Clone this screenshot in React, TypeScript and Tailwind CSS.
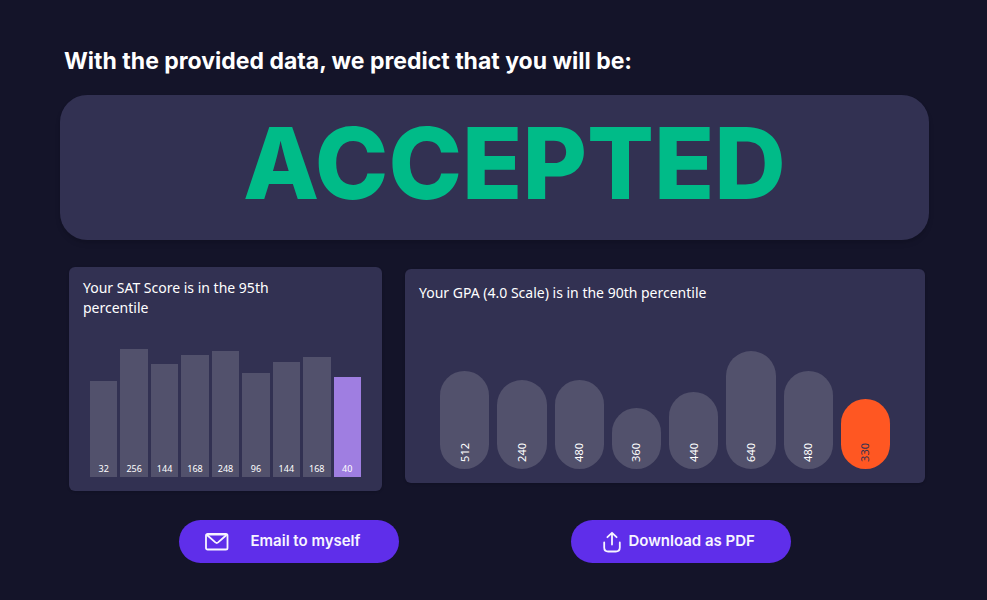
import React from "react";

interface Bar {
  value: number;
  height: number;
  active?: boolean;
}

interface ChartCardProps {
  className: string;
  children: React.ReactNode;
}

interface ActionButtonProps {
  title: string;
  icon: React.ReactNode;
  className: string;
}

const satBars: Bar[] = [
  { value: 32, height: 96 },
  { value: 256, height: 128 },
  { value: 144, height: 113 },
  { value: 168, height: 122 },
  { value: 248, height: 126 },
  { value: 96, height: 104 },
  { value: 144, height: 115 },
  { value: 168, height: 120 },
  { value: 40, height: 100, active: true },
];

const gpaBars: Bar[] = [
  { value: 512, height: 98 },
  { value: 240, height: 89 },
  { value: 480, height: 89 },
  { value: 360, height: 61 },
  { value: 440, height: 77 },
  { value: 640, height: 118 },
  { value: 480, height: 98 },
  { value: 330, height: 70, active: true },
];

const MailIcon = () => (
  <svg width="24" height="18" viewBox="0 0 24 18" fill="none" stroke="currentColor" strokeWidth="1.8" strokeLinejoin="round" aria-hidden="true">
    <rect x="1" y="1" width="21.5" height="15.5" rx="1.6" />
    <path d="M2 2 L10.4 9.4 Q11.75 10.5 13.1 9.4 L21.5 2" />
    <path d="M2 1.6 H21.5" />
  </svg>
);

const UploadIcon = () => (
  <svg width="18" height="22" viewBox="0 0 18 22" fill="none" stroke="currentColor" strokeWidth="1.8" strokeLinecap="round" strokeLinejoin="round" aria-hidden="true">
    <path d="M9 13.5 V1.8 M4.4 6.2 L9 1.8 L13.6 6.2" />
    <path d="M1.2 11.5 V16.5 Q1.2 20.5 5.2 20.5 H12.8 Q16.8 20.5 16.8 16.5 V11.5" />
  </svg>
);

const ChartCard: React.FC<ChartCardProps> = ({ className, children }) => (
  <section className={`rounded-md bg-[#323152] px-3.5 pb-3.5 shadow-sm ${className}`}>
    {children}
  </section>
);

const ActionButton: React.FC<ActionButtonProps> = ({ title, icon, className }) => (
  <button
    type="button"
    className={`flex h-[43px] w-[220px] cursor-pointer items-center rounded-full bg-[#5f2eea] text-[15px] font-semibold text-[#f7f5ff] ${className}`}
  >
    {icon}
    <span>{title}</span>
  </button>
);

export default function App() {
  return (
    <main className="min-h-screen bg-[#141429] pt-[46px] pr-[58px] pb-9 pl-15 font-['Inter',sans-serif] text-white">
      <h1 className="pl-1 text-[23px] leading-[30px] font-bold">
        With the provided data, we predict that you will be:
      </h1>

      <div className="mt-[19px] flex h-[145px] items-center justify-center rounded-[27px] bg-[#323152] pb-2 pl-10 shadow-md">
        <p className="text-[99px] leading-none font-extrabold text-[#00bb88]">ACCEPTED</p>
      </div>

      <div className="mt-[27px] grid grid-cols-[313fr_520fr] items-start gap-[23px] pr-1 pl-[9px]">
        <ChartCard className="pt-[11px]">
          <h2 className="max-w-[200px] font-['Noto_Sans',sans-serif] text-sm leading-5">
            Your SAT Score is in the 95th percentile
          </h2>
          <ul className="mt-[31px] flex items-end gap-[3px] px-[7px]">
            {satBars.map((bar, index) => (
              <li
                key={index}
                className={`flex flex-1 items-end justify-center pb-[3px] font-['Noto_Sans',sans-serif] text-[9px] leading-[10px] ${
                  bar.active ? "bg-[#9f7ee1]" : "bg-[#52516c]"
                }`}
                style={{ height: bar.height }}
              >
                {bar.value}
              </li>
            ))}
          </ul>
        </ChartCard>

        <ChartCard className="mt-0.5 pt-[14px]">
          <h2 className="font-['Noto_Sans',sans-serif] text-sm leading-5">
            Your GPA (4.0 Scale) is in the 90th percentile
          </h2>
          <ul className="mt-12 flex items-end gap-2 px-[21px]">
            {gpaBars.map((bar, index) => (
              <li
                key={index}
                className={`flex flex-1 items-end justify-center rounded-full pb-[7px] font-['Noto_Sans',sans-serif] text-[11px] leading-3 ${
                  bar.active ? "bg-[#ff5722] text-[#323152]" : "bg-[#52516c]"
                }`}
                style={{ height: bar.height }}
              >
                <span className="rotate-180 [writing-mode:vertical-rl]">{bar.value}</span>
              </li>
            ))}
          </ul>
        </ChartCard>
      </div>

      <div className="mt-[29px] flex justify-center gap-[172px] pr-5">
        <ActionButton title="Email to myself" icon={<MailIcon />} className="gap-[22px] pl-[26px]" />
        <ActionButton title="Download as PDF" icon={<UploadIcon />} className="gap-2 pl-8" />
      </div>
    </main>
  );
}
